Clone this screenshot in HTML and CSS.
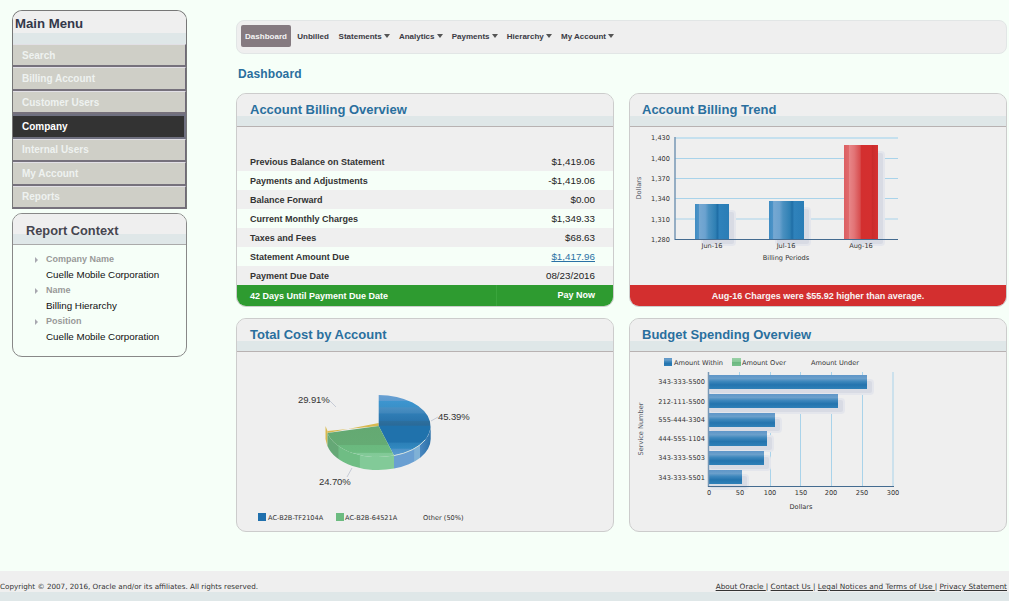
FILE: index.html
```html
<!DOCTYPE html>
<html lang="en">
<head>
<meta charset="utf-8">
<title>Dashboard</title>
<link rel="stylesheet" href="styles.css">
</head>
<body>
<div class="page">
  <aside class="sidebar">
    <section class="side-box menu-box">
      <h2 class="menu-title">Main Menu</h2>
      <ul class="menu">
        <li class="menu-item">Search</li>
        <li class="menu-item">Billing Account</li>
        <li class="menu-item">Customer Users</li>
        <li class="menu-item active">Company</li>
        <li class="menu-item">Internal Users</li>
        <li class="menu-item">My Account</li>
        <li class="menu-item">Reports</li>
      </ul>
    </section>
    <section class="side-box context-box">
      <h2 class="context-title">Report Context</h2>
      <dl class="context">
        <dt>Company Name</dt><dd>Cuelle Mobile Corporation</dd>
        <dt>Name</dt><dd>Billing Hierarchy</dd>
        <dt>Position</dt><dd>Cuelle Mobile Corporation</dd>
      </dl>
    </section>
  </aside>
  <main class="main">
    <nav class="nav">
      <a class="nav-item current">Dashboard</a>
      <a class="nav-item plain">Unbilled</a>
      <a class="nav-item caret">Statements</a>
      <a class="nav-item caret">Analytics</a>
      <a class="nav-item caret">Payments</a>
      <a class="nav-item caret">Hierarchy</a>
      <a class="nav-item caret">My Account</a>
    </nav>
    <h1 class="page-title">Dashboard</h1>
    <div class="cards">
      <section class="card">
        <h2 class="card-title">Account Billing Overview</h2>
        <div class="card-body rows">
          <div class="row"><span>Previous Balance on Statement</span><span>$1,419.06</span></div>
          <div class="row"><span>Payments and Adjustments</span><span>-$1,419.06</span></div>
          <div class="row"><span>Balance Forward</span><span>$0.00</span></div>
          <div class="row"><span>Current Monthly Charges</span><span>$1,349.33</span></div>
          <div class="row"><span>Taxes and Fees</span><span>$68.63</span></div>
          <div class="row"><span>Statement Amount Due</span><a class="due">$1,417.96</a></div>
          <div class="row"><span>Payment Due Date</span><span>08/23/2016</span></div>
        </div>
        <div class="card-foot green"><span class="foot-left">42 Days Until Payment Due Date</span><span class="foot-right">Pay Now</span></div>
      </section>

      <section class="card">
        <h2 class="card-title">Account Billing Trend</h2>
        <div class="card-body">
          <svg class="chart" width="376" height="158" viewBox="630 127 376 158">
            <defs>
              <linearGradient id="vblue" x1="0" y1="0" x2="1" y2="0">
                <stop offset="0" stop-color="#3f8cc2"/><stop offset=".12" stop-color="#4f94c8"/>
                <stop offset=".13" stop-color="#76a8d2"/><stop offset=".3" stop-color="#6ba2cf"/>
                <stop offset=".4" stop-color="#4a90c0"/><stop offset=".6" stop-color="#2f80b4"/>
                <stop offset=".66" stop-color="#1f6ea6"/><stop offset=".72" stop-color="#2f82bb"/>
                <stop offset="1" stop-color="#2a7db6"/>
              </linearGradient>
              <linearGradient id="vred" x1="0" y1="0" x2="1" y2="0">
                <stop offset="0" stop-color="#dc5f62"/><stop offset=".14" stop-color="#e06a6c"/>
                <stop offset=".15" stop-color="#e88688"/><stop offset=".3" stop-color="#e27476"/>
                <stop offset=".48" stop-color="#d74d4e"/><stop offset=".5" stop-color="#d32f2f"/>
                <stop offset=".8" stop-color="#d42f2f"/><stop offset=".83" stop-color="#c92b2b"/>
                <stop offset="1" stop-color="#d63232"/>
              </linearGradient>
            </defs>
            <g class="grid-soft">
              <line class="grid-top" x1="675" y1="138" x2="898" y2="138"/>
              <line x1="675" y1="158.5" x2="898" y2="158.5"/>
              <line x1="675" y1="178.5" x2="898" y2="178.5"/>
              <line x1="675" y1="198.5" x2="898" y2="198.5"/>
              <line x1="675" y1="219" x2="898" y2="219"/>
            </g>
            <rect class="shadow" x="702" y="211" width="33" height="34" rx="3"/>
            <rect class="shadow" x="776" y="208" width="34" height="37" rx="3"/>
            <rect class="shadow" x="851" y="152" width="33" height="93" rx="3"/>
            <rect x="695" y="204" width="34" height="35" fill="url(#vblue)"/>
            <rect x="769" y="201" width="35" height="38" fill="url(#vblue)"/>
            <rect x="844" y="145" width="34" height="94" fill="url(#vred)"/>
            <line class="axis-y" x1="675" y1="137" x2="675" y2="240"/>
            <line class="axis-x" x1="675" y1="239.5" x2="898" y2="239.5"/>
            <g class="tick end">
              <text x="670" y="140">1,430</text>
              <text x="670" y="161">1,400</text>
              <text x="670" y="181">1,370</text>
              <text x="670" y="201">1,340</text>
              <text x="670" y="222">1,310</text>
              <text x="670" y="242">1,280</text>
            </g>
            <g class="tick mid">
              <text x="712" y="248">Jun-16</text>
              <text x="786" y="248">Jul-16</text>
              <text x="861" y="248">Aug-16</text>
              <text x="786" y="260">Billing Periods</text>
            </g>
            <text class="tick mid muted" transform="translate(641 188) rotate(-90)">Dollars</text>
          </svg>
        </div>
        <div class="card-foot red">Aug-16 Charges were $55.92 higher than average.</div>
      </section>

      <section class="card">
        <h2 class="card-title">Total Cost by Account</h2>
        <div class="card-body">
          <svg class="chart" width="376" height="180" viewBox="237 352 376 180">
            <defs>
              <linearGradient id="pieblue" x1="0" y1="0" x2="0" y2="1">
                <stop offset="0" stop-color="#6aa0d2"/><stop offset=".09" stop-color="#5f9cd0"/>
                <stop offset=".1" stop-color="#3d95cf"/><stop offset=".2" stop-color="#3a91c9"/>
                <stop offset=".21" stop-color="#4a8fc2"/><stop offset=".3" stop-color="#3f86bb"/>
                <stop offset=".31" stop-color="#2f7db5"/><stop offset=".42" stop-color="#2a75ad"/>
                <stop offset=".43" stop-color="#2c6f9f"/><stop offset=".5" stop-color="#2a6a98"/>
                <stop offset=".51" stop-color="#2072ac"/><stop offset=".78" stop-color="#2072ac"/>
                <stop offset=".79" stop-color="#2c80b8"/><stop offset=".88" stop-color="#3188bf"/>
                <stop offset=".89" stop-color="#4b92c8"/><stop offset="1" stop-color="#5a9ad0"/>
              </linearGradient>
              <linearGradient id="piegreen" x1="0" y1="0" x2="0" y2="1">
                <stop offset="0" stop-color="#64a972"/><stop offset=".6" stop-color="#65ab74"/>
                <stop offset=".62" stop-color="#6ab97e"/><stop offset=".85" stop-color="#6cbb80"/>
                <stop offset=".87" stop-color="#80c996"/><stop offset="1" stop-color="#85cb9a"/>
              </linearGradient>
              <linearGradient id="sideblue" x1="0" y1="0" x2="1" y2="0">
                <stop offset="0" stop-color="#6a9fd2"/><stop offset=".55" stop-color="#6a9fd2"/>
                <stop offset=".56" stop-color="#7fb1d6"/><stop offset=".7" stop-color="#7fb1d6"/>
                <stop offset=".71" stop-color="#4a88c0"/><stop offset="1" stop-color="#2a70a8"/>
              </linearGradient>
              <linearGradient id="sidegreen" x1="0" y1="0" x2="1" y2="0">
                <stop offset="0" stop-color="#65a876"/><stop offset=".16" stop-color="#65a876"/>
                <stop offset=".17" stop-color="#6fbd84"/><stop offset=".48" stop-color="#6fbd84"/>
                <stop offset=".49" stop-color="#82ca98"/><stop offset="1" stop-color="#82ca98"/>
              </linearGradient>
            </defs>
            <path d="M325.5,426 L325.5,439 L327.5,447 L327.5,431 Z" fill="#d8b94f"/>
            <path d="M327.5,431 L378.7,426 L378.7,423 L327.5,433 Z" fill="#d8b94f"/>
            <path d="M394,455.6 A52,31 0 0 0 430.7,426 L430.7,439 A52,31 0 0 1 394,468.6 Z" fill="url(#sideblue)"/>
            <path d="M327.5,433 A52,31 0 0 0 394,455.6 L394,468.6 A52,31 0 0 1 327.5,446 Z" fill="url(#sidegreen)"/>
            <path d="M378.7,426 L378.7,395 A52,31 0 0 1 394,455.6 Z" fill="url(#pieblue)"/>
            <path d="M378.7,426 L394,455.6 A52,31 0 0 1 327.5,433 Z" fill="url(#piegreen)"/>
            <path class="pie-rim" d="M394,455.6 A52,31 0 0 0 425,440"/>
            <line class="leader" x1="329" y1="400" x2="336" y2="407"/>
            <line class="leader" x1="431" y1="421" x2="438" y2="417"/>
            <line class="leader" x1="352" y1="468" x2="347" y2="477"/>
            <g class="pie-label">
              <text x="298" y="403">29.91%</text>
              <text x="438" y="420">45.39%</text>
              <text x="319" y="485">24.70%</text>
            </g>
            <rect x="258" y="513" width="8" height="8" fill="#2070ad"/>
            <rect x="336" y="513" width="8" height="8" fill="#6cbb80"/>
            <g class="tick">
              <text x="268" y="520">AC-B2B-TF2104A</text>
              <text x="345" y="520">AC-B2B-64521A</text>
              <text x="423" y="520">Other (50%)</text>
            </g>
          </svg>
        </div>
      </section>

      <section class="card">
        <h2 class="card-title">Budget Spending Overview</h2>
        <div class="card-body">
          <svg class="chart" width="376" height="180" viewBox="630 352 376 180">
            <defs>
              <linearGradient id="hblue" x1="0" y1="0" x2="0" y2="1">
                <stop offset="0" stop-color="#5f96c8"/><stop offset=".25" stop-color="#6a9fcb"/>
                <stop offset=".45" stop-color="#3f88bd"/><stop offset=".7" stop-color="#2474ae"/>
                <stop offset="1" stop-color="#2f80b8"/>
              </linearGradient>
              <linearGradient id="hgreen" x1="0" y1="0" x2="0" y2="1">
                <stop offset="0" stop-color="#9ad0a8"/><stop offset=".5" stop-color="#86c896"/>
                <stop offset=".55" stop-color="#6cb880"/><stop offset="1" stop-color="#78c08c"/>
              </linearGradient>
            </defs>
            <rect x="664" y="358" width="8" height="8" fill="url(#hblue)"/>
            <rect x="732" y="358" width="9" height="8" fill="url(#hgreen)"/>
            <g class="tick">
              <text x="674" y="365">Amount Within</text>
              <text x="742" y="365">Amount Over</text>
              <text x="811" y="365">Amount Under</text>
            </g>
            <g class="grid-soft">
              <line x1="739.5" y1="372" x2="739.5" y2="486"/>
              <line x1="770.5" y1="372" x2="770.5" y2="486"/>
              <line x1="800.5" y1="372" x2="800.5" y2="486"/>
              <line x1="831.5" y1="372" x2="831.5" y2="486"/>
              <line x1="862.5" y1="372" x2="862.5" y2="486"/>
              <line x1="893" y1="372" x2="893" y2="486"/>
            </g>
            <rect class="shadow" x="709" y="380" width="164" height="14" rx="3"/>
            <rect class="shadow" x="709" y="399" width="135" height="14" rx="3"/>
            <rect class="shadow" x="709" y="418" width="72" height="14" rx="3"/>
            <rect class="shadow" x="709" y="436" width="64" height="15" rx="3"/>
            <rect class="shadow" x="709" y="456" width="61" height="14" rx="3"/>
            <rect class="shadow" x="709" y="475" width="39" height="14" rx="3"/>
            <rect x="709" y="375" width="158" height="14" fill="url(#hblue)"/>
            <rect x="709" y="394" width="129" height="14" fill="url(#hblue)"/>
            <rect x="709" y="413" width="66" height="14" fill="url(#hblue)"/>
            <rect x="709" y="431" width="58" height="15" fill="url(#hblue)"/>
            <rect x="709" y="451" width="55" height="14" fill="url(#hblue)"/>
            <rect x="709" y="470" width="33" height="14" fill="url(#hblue)"/>
            <line class="axis-y" x1="708.5" y1="372" x2="708.5" y2="487"/>
            <line class="axis-x" x1="708" y1="486.5" x2="894" y2="486.5"/>
            <g class="tick end">
              <text x="705" y="384">343-333-5500</text>
              <text x="705" y="404">212-111-5500</text>
              <text x="705" y="422">555-444-3304</text>
              <text x="705" y="441">444-555-1104</text>
              <text x="705" y="460">343-333-5503</text>
              <text x="705" y="480">343-333-5501</text>
            </g>
            <g class="tick mid">
              <text x="709" y="495">0</text>
              <text x="740" y="495">50</text>
              <text x="770" y="495">100</text>
              <text x="801" y="495">150</text>
              <text x="831" y="495">200</text>
              <text x="862" y="495">250</text>
              <text x="893" y="495">300</text>
              <text x="801" y="509">Dollars</text>
            </g>
            <text class="tick mid muted" transform="translate(643 429) rotate(-90)">Service Number</text>
          </svg>
        </div>
      </section>
    </div>
  </main>
</div>
<footer class="footer">
  <span class="foot-copy">Copyright © 2007, 2016, Oracle and/or its affiliates. All rights reserved.</span>
  <span class="foot-links"><a>About Oracle </a> | <a>Contact Us </a> | <a>Legal Notices and Terms of Use </a> | <a>Privacy Statement</a></span>
</footer>
</body>
</html>
```
FILE: styles.css
```css
* { box-sizing: border-box; }
html, body { margin: 0; padding: 0; }
body {
  width: 1009px;
  height: 601px;
  overflow: hidden;
  display: flex;
  flex-direction: column;
  background: #f6fff8;
  font-family: "Liberation Sans", Arial, sans-serif;
  color: #333;
}
.page { display: flex; padding: 10px 0 0 12px; }
.sidebar { width: 175px; display: flex; flex-direction: column; gap: 4px; }
.side-box { border-radius: 10px; overflow: hidden; }
.menu-box {
  height: 199px;
  border: 1px solid #777;
  border-bottom: 0;
  border-bottom-left-radius: 0;
  border-bottom-right-radius: 0;
}
.menu-title, .context-title {
  margin: 0;
  background: linear-gradient(#efefef 22px, #dfe7e8 22px);
  font-size: 14px;
  font-weight: bold;
}
.menu-title { height: 33px; padding: 5px 0 0 2px; color: #33384a; font-size: 13.2px; }
.menu { list-style: none; margin: 0; padding: 0; height: 165px; display: flex; flex-direction: column; }
.menu-item {
  flex: 1;
  display: flex;
  align-items: center;
  padding-left: 9px;
  background: #cfcfc7;
  color: #eef2f0;
  font-size: 10px;
  font-weight: bold;
  border-top: 1px solid #e2e0e6;
  border-right: 1px solid #6f6a78;
  border-bottom: 2px solid #76717c;
}
.menu-item.active { background: #333; color: #fff; border-color: #6f7080; border-width: 2px; }
.context-box { height: 144px; border: 1px solid #888; }
.context-title { height: 31px; padding: 9px 0 0 13px; color: #45464f; font-size: 12.8px; border-bottom: 1px solid #aaa; background: linear-gradient(#efefef 20px, #dfe7e8 20px); }
.context { margin: 0; padding: 7px 0 0 33px; font-size: 9.8px; line-height: 15.4px; }
.context dt { position: relative; color: #999; font-weight: bold; font-size: 9px; }
.context dt::before {
  content: "";
  position: absolute;
  left: -11px;
  top: 5px;
  border-left: 3px solid #a8a8b0;
  border-top: 3px solid transparent;
  border-bottom: 3px solid transparent;
}
.context dd { margin: 0; color: #111; }

.main { width: 771px; margin-left: 49px; padding-top: 10px; }
.nav {
  height: 34px;
  display: flex;
  align-items: center;
  gap: 9.25px;
  padding: 0 0 2px 4px;
  background: #efefef;
  border: 1px solid #e2e6e6;
  border-radius: 8px;
}
.nav-item { font-size: 8px; font-weight: bold; color: #3a3a44; display: flex; align-items: center; }
.nav-item.current {
  height: 22px;
  width: 50px;
  justify-content: center;
  background: #857a80;
  color: #f4f4f4;
  border-radius: 2px;
  margin-right: -3px;
}
.nav-item.plain { margin-right: .5px; }
.caret::after {
  content: "";
  margin-left: 2px;
  border-top: 4px solid #555;
  border-left: 3.5px solid transparent;
  border-right: 3.5px solid transparent;
}
.page-title { margin: 13px 0 12px 2px; height: 14px; line-height: 14px; font-size: 12px; font-weight: bold; color: #2a6f9e; letter-spacing: .1px; }
.cards { display: grid; grid-template-columns: 378px 378px; grid-auto-rows: 214px; column-gap: 15px; row-gap: 11px; }
.card {
  display: flex;
  flex-direction: column;
  overflow: hidden;
  background: #efefef;
  border: 1px solid #ccc;
  border-radius: 10px;
}
.card-title {
  margin: 0;
  height: 33px;
  flex: none;
  padding: 8px 0 0 13px;
  font-size: 13px;
  font-weight: bold;
  color: #2a6f9e;
  background: linear-gradient(#efefef 22px, #dfe7e8 22px);
  border-bottom: 1px solid #b8b2b2;
}
.card:nth-child(even) .card-title { padding-left: 12px; }
.card-body { flex: 1; min-height: 0; }
.chart { display: block; }
.rows { padding-top: 25px; font-size: 9px; font-weight: bold; color: #333; }
.row {
  height: 19px;
  display: flex;
  justify-content: space-between;
  align-items: center;
  padding: 0 18px 0 13px;
}
.row:nth-child(even) { background: #f6fff8; }
.row span:last-child, .due { font-weight: normal; font-size: 9.8px; color: #222; }
.due { color: #2a72a5; text-decoration: underline; }
.card-foot {
  height: 21px;
  flex: none;
  display: flex;
  align-items: center;
  color: #fff;
  font-size: 9px;
  font-weight: bold;
}
.green { background: #2e9b30; }
.red { background: #d32f2f; justify-content: center; color: #f8f4f4; }
.foot-left { width: 259px; padding-left: 13px; }
.foot-right { flex: 1; text-align: right; padding-right: 18px; border-left: 1px solid #3aa53c; line-height: 21px; }

.grid-soft line { stroke: #a9d3ea; stroke-width: 1; }
.grid-soft .grid-top { stroke: #c5e0ee; stroke-width: 2; }
.shadow { fill: #d8dbe4; stroke: #e4e6ec; stroke-width: 2; }
.axis-y { stroke: #7797b5; stroke-width: 1.5; }
.axis-x { stroke: #446b90; stroke-width: 1; }
.tick { font-family: "DejaVu Sans", sans-serif; font-size: 6.6px; fill: #333; }
.end { text-anchor: end; }
.mid { text-anchor: middle; }
.muted { fill: #555a68; }
.pie-rim { fill: none; stroke: #cfe0e0; stroke-width: 1; }
.leader { stroke: #c6cbd6; stroke-width: 1; }
.pie-label { font-size: 9.5px; letter-spacing: -.1px; fill: #333; }

.footer {
  margin-top: auto;
  height: 30px;
  padding-top: 11px;
  display: flex;
  justify-content: space-between;
  align-items: flex-start;
  font-family: "DejaVu Sans", sans-serif;
  line-height: 9px;
  color: #333;
  padding-right: 2px;
  background: linear-gradient(#efefef 21px, #dfe7e8 21px);
}
.foot-copy { font-size: 7.2px; }
.foot-links { font-size: 7.33px; }
.foot-links a { text-decoration: underline; }
```
